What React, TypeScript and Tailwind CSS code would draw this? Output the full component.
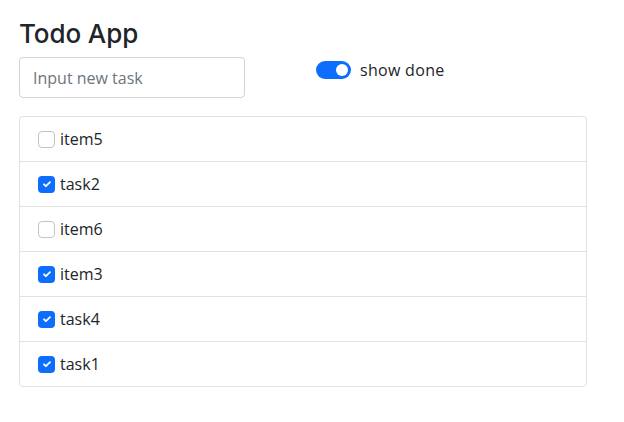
import React, { useState } from "react";

const initial = [
  { name: "item5", done: false },
  { name: "task2", done: true },
  { name: "item6", done: false },
  { name: "item3", done: true },
  { name: "task4", done: true },
  { name: "task1", done: true },
];

function Check({ checked }: { checked: boolean }) {
  return checked ? (
    <span className="flex h-[17px] w-[17px] shrink-0 items-center justify-center rounded-[4px] bg-[#0d6efd]">
      <svg width="12" height="12" viewBox="0 0 20 20">
        <path d="M5 10.5l3.2 3.2 6.8-6.8" fill="none" stroke="#fff" strokeWidth="3" strokeLinecap="round" strokeLinejoin="round" />
      </svg>
    </span>
  ) : (
    <span className="block h-[17px] w-[17px] shrink-0 rounded-[4px] border border-[#c4c4c4] bg-white" />
  );
}

export default function App() {
  const [items] = useState(initial);
  return (
    <div className="min-h-[422px] w-[624px] bg-white px-[19px] pt-[19px] text-[#212529]" style={{ fontFamily: '"Open Sans", sans-serif' }}>
      <h1 className="text-[26px] font-medium leading-[30px] tracking-[-0.1px]" style={{ fontFamily: 'Inter, sans-serif' }}>Todo App</h1>
      <div className="mt-[8px] flex items-start">
        <input
          placeholder="Input new task"
          className="h-[41px] w-[226px] rounded-[4px] border border-[#ced4da] px-[13px] text-[16px] placeholder:text-[#6c757d] outline-none"
        />
        <div className="ml-[71px] mt-[1px] flex items-center">
          <span className="flex h-[18px] w-[35px] items-center justify-end rounded-full bg-[#0d6efd] pr-[3px]">
            <span className="h-[12px] w-[12px] rounded-full bg-white" />
          </span>
          <span className="ml-[9px] text-[16px] tracking-[0.3px]">show done</span>
        </div>
      </div>
      <ul className="mt-[18px] w-[568px] overflow-hidden rounded-[4px] border border-[#dee2e6]">
        {items.map((it, i) => (
          <li
            key={it.name}
            className={`flex items-center pl-[18px] text-[16px] ${i > 0 ? "h-[45px] border-t border-[#dee2e6]" : "h-[44px]"}`}
          >
            <Check checked={it.done} />
            <span className="ml-[5px]">{it.name}</span>
          </li>
        ))}
      </ul>
    </div>
  );
}
